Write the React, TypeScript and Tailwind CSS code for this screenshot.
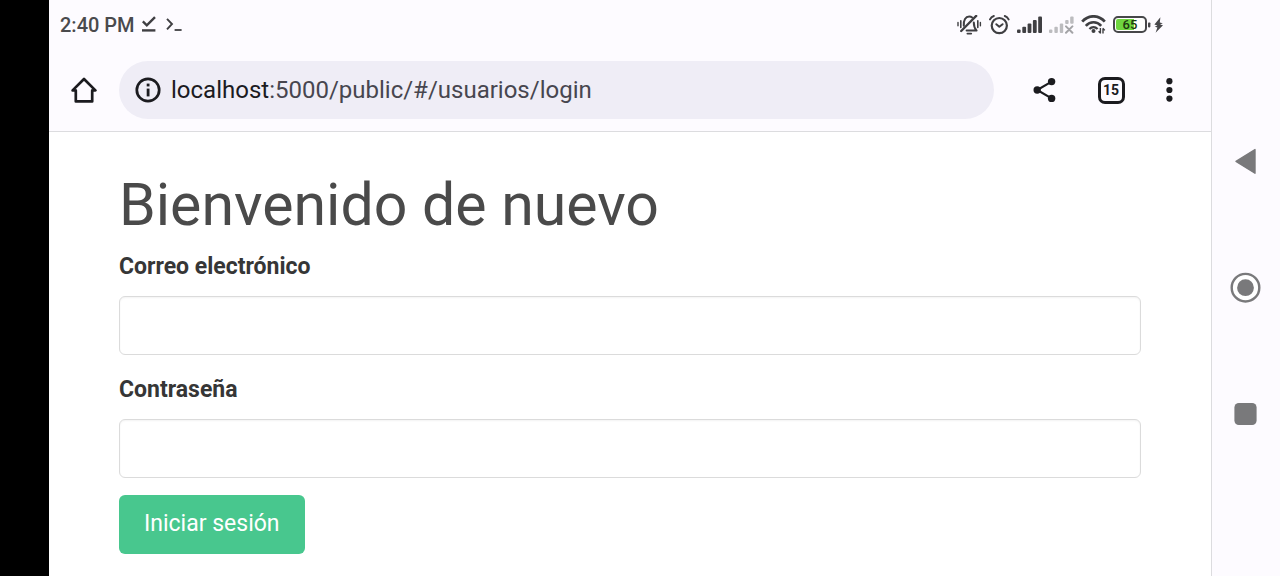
import type { ReactNode } from "react";

type FieldProps = {
  id: string;
  label: string;
  type: string;
};

function Field({ id, label, type }: FieldProps) {
  return (
    <div className="flex flex-col gap-[11px]">
      <label
        htmlFor={id}
        className="text-[23px] leading-9 font-bold text-[#363636]"
      >
        {label}
      </label>
      <input
        id={id}
        type={type}
        className="w-full h-[59px] px-4 text-[23px] text-[#363636] bg-white border border-[#dbdbdb] rounded-md shadow-[inset_0_1px_2px_rgba(10,10,10,0.05)] outline-none"
      />
    </div>
  );
}

type IconButtonProps = {
  label: string;
  narrow?: boolean;
  children: ReactNode;
};

function IconButton({ label, narrow, children }: IconButtonProps) {
  return (
    <button
      type="button"
      aria-label={label}
      className={`flex items-center justify-center h-8 shrink-0 ${narrow ? "w-4" : "w-8"}`}
    >
      {children}
    </button>
  );
}

function MutedBellIcon() {
  return (
    <svg width="25" height="20" viewBox="0 0 25 20" fill="none" stroke="#3f3f42">
      <path d="M1 7.4v3.4M23.4 7.4v3.4" strokeWidth="1.4" strokeLinecap="round" />
      <path d="M3.8 5.8v6.6M20.8 5.8v6.6" strokeWidth="1.6" strokeLinecap="round" />
      <path
        d="M6.8 10.8C6.4 4.8 8.6 1.6 12.2 1.6c1.2 0 2.2.3 3 .9M16.8 7.4c0 4 .8 6 2.8 8.2H9.6"
        strokeWidth="2"
        strokeLinecap="round"
        strokeLinejoin="round"
      />
      <path d="M19.2.9 4.2 16" strokeWidth="2.3" strokeLinecap="round" />
      <path d="M10.4 18.6h3.8" strokeWidth="1.8" strokeLinecap="round" />
    </svg>
  );
}

function AlarmIcon() {
  return (
    <svg
      width="21"
      height="20"
      viewBox="0 0 21 20"
      fill="none"
      stroke="#3f3f42"
      strokeLinecap="round"
      strokeLinejoin="round"
    >
      <circle cx="10.3" cy="10.6" r="7.6" strokeWidth="2.2" />
      <path d="M7.3 9.2l3 2.6 3.3-2.6" strokeWidth="2" />
      <path d="M1 4.4C1.8 2.8 3 1.6 4.8 1M19.6 4.4C18.8 2.8 17.6 1.6 15.8 1" strokeWidth="2" />
    </svg>
  );
}

function SignalIcon() {
  return (
    <svg width="25" height="18" viewBox="0 0 25 18" fill="#3f3f42">
      <rect x="0" y="13.4" width="3.6" height="3.6" rx="1" />
      <rect x="5.3" y="10.8" width="3.8" height="6.2" rx="1" />
      <rect x="10.6" y="7.6" width="3.8" height="9.4" rx="1" />
      <rect x="15.9" y="4" width="3.8" height="13" rx="1" />
      <rect x="21.2" y="0.4" width="3.8" height="16.6" rx="1" />
    </svg>
  );
}

function NoSignalIcon() {
  return (
    <svg width="25" height="18" viewBox="0 0 25 18" fill="#bcbcbf">
      <rect x="0" y="13.4" width="3.4" height="3.6" rx="1" />
      <rect x="5.4" y="10.8" width="3.4" height="6.2" rx="1" />
      <rect x="10.8" y="7.6" width="3.4" height="9.4" rx="1" />
      <rect x="16.2" y="4" width="3.4" height="4" rx="1" />
      <rect x="21.2" y="0.4" width="3.4" height="7.4" rx="1" />
      <path
        d="M17 10.4l6.4 6.4M23.4 10.4L17 16.8"
        stroke="#a4a4a7"
        strokeWidth="2"
        strokeLinecap="round"
      />
    </svg>
  );
}

function WifiIcon() {
  return (
    <svg width="25" height="19" viewBox="0 0 25 19" fill="none" stroke="#3f3f42">
      <path d="M1.2 6.6C7.6-.4 17.4-.4 23.8 6.6" strokeWidth="2.8" />
      <path d="M4.8 10.8c4.4-4.8 11-4.8 15.4 0" strokeWidth="2.6" />
      <path d="M8.4 14c2.4-2.5 5.8-2.5 8.2 0" strokeWidth="2.2" />
      <circle cx="12.5" cy="16" r="2" fill="#3f3f42" stroke="none" />
      <path d="M19.4 13v5.4M19.6 18.4l-2-2.2M22 18.6v-5.4M21.8 13.2l2 2.2" strokeWidth="1.4" />
    </svg>
  );
}

function Battery() {
  return (
    <div className="flex items-center">
      <div className="w-[34px] h-[17px] p-px border-2 border-[#47474a] rounded-[5px] bg-white">
        <div className="flex items-center justify-center h-full rounded-xs bg-linear-to-r from-[#6fd63f] from-65% to-white to-65% text-[13px] leading-3 font-medium text-[#1c3a10]">
          65
        </div>
      </div>
      <svg width="17" height="16" viewBox="0 0 17 16" fill="#47474a">
        <rect x="1" y="5.4" width="2.4" height="5" rx="0.8" />
        <path d="M13.4.2 7.4 7.4l3 1.2-2.6 1.2 2.6.6L8.6 15.8l7.4-7.6-3-.8 2.8-1.2-3-.8z" />
      </svg>
    </div>
  );
}

function StatusBar() {
  return (
    <div className="flex items-center justify-between h-[49px] pl-[11px] pr-[47px]">
      <div className="flex items-center gap-[7px] text-xl font-medium text-[#4a4a4d]">
        <span>2:40 PM</span>
        <svg width="14" height="18" viewBox="0 0 14 18" fill="none" stroke="#3f3f42">
          <path d="M.8 5.4l4 4L13 1.2" strokeWidth="2.4" />
          <path d="M0 14.4h13.4" strokeWidth="2.4" />
        </svg>
        <svg width="20" height="18" viewBox="0 0 20 18" fill="none" stroke="#3f3f42">
          <path d="M4 2.8l5 5.2-5 5.4" strokeWidth="1.9" />
          <path d="M11.6 14h7" strokeWidth="1.8" />
        </svg>
      </div>
      <div className="flex items-center gap-[7px]">
        <MutedBellIcon />
        <AlarmIcon />
        <SignalIcon />
        <NoSignalIcon />
        <WifiIcon />
        <Battery />
      </div>
    </div>
  );
}

function Toolbar() {
  return (
    <div className="flex items-center h-[83px] pl-[19px] pr-[34px] border-b border-[#dcdcdf]">
      <IconButton label="Inicio">
        <svg width="26" height="26" viewBox="0 0 26 26" fill="none">
          <path
            d="M4.8 13.4H1.6L13 2l11.4 11.4h-3.2v11H4.8z"
            stroke="#1b1b1f"
            strokeWidth="2.7"
            strokeLinejoin="round"
          />
        </svg>
      </IconButton>
      <div className="flex flex-1 items-center gap-2.5 h-[58px] ml-[19px] px-4 rounded-full bg-[#efedf6]">
        <svg width="26" height="26" viewBox="0 0 26 26" fill="#1b1b1f">
          <circle cx="13" cy="13" r="11.2" fill="none" stroke="#1b1b1f" strokeWidth="2.7" />
          <rect x="11.7" y="6.6" width="2.8" height="2.8" />
          <rect x="11.7" y="11.6" width="2.8" height="7.8" />
        </svg>
        <a href="#/usuarios/login" className="text-2xl text-[#47464f]">
          <span className="text-[#1b1b1f]">localhost</span>
          :5000/public/#/usuarios/login
        </a>
      </div>
      <div className="flex items-center gap-[34px] ml-[35px]">
        <IconButton label="Compartir">
          <svg width="24" height="26" viewBox="0 0 24 26" fill="#1b1b1f">
            <path d="M18.6 4.6 4.2 13l14.4 8.4" fill="none" stroke="#1b1b1f" strokeWidth="2.2" />
            <circle cx="18.6" cy="4.6" r="3.7" />
            <circle cx="4.2" cy="13" r="3.7" />
            <circle cx="18.6" cy="21.4" r="3.7" />
          </svg>
        </IconButton>
        <IconButton label="Pestañas">
          <span className="flex items-center justify-center size-[27px] border-3 border-[#1b1b1f] rounded-[7px] text-sm font-bold text-[#1b1b1f]">
            15
          </span>
        </IconButton>
        <IconButton label="Más opciones" narrow>
          <svg width="8" height="26" viewBox="0 0 8 26" fill="#1b1b1f">
            <circle cx="4.4" cy="4.2" r="3.1" />
            <circle cx="4.4" cy="13" r="3.1" />
            <circle cx="4.4" cy="21.6" r="3.1" />
          </svg>
        </IconButton>
      </div>
    </div>
  );
}

function NavigationBar() {
  return (
    <nav className="flex flex-col items-center justify-center gap-[94px] w-[69px] shrink-0 border-l border-[#dcdcdf] bg-[#fdfbff]">
      <IconButton label="Atrás">
        <svg width="32" height="32" viewBox="0 0 32 32" fill="#79797b">
          <path
            d="M6 15.4 25 3.6v23.6z"
            stroke="#79797b"
            strokeWidth="1.4"
            strokeLinejoin="round"
          />
        </svg>
      </IconButton>
      <IconButton label="Pantalla principal">
        <svg width="32" height="32" viewBox="0 0 32 32">
          <circle cx="15.5" cy="15.7" r="13.8" fill="#fff" stroke="#79797b" strokeWidth="2.4" />
          <circle cx="15.5" cy="15.7" r="8.4" fill="#79797b" />
        </svg>
      </IconButton>
      <IconButton label="Recientes">
        <svg width="32" height="32" viewBox="0 0 32 32" fill="#79797b">
          <rect x="4.4" y="5" width="22.2" height="22" rx="4.4" />
        </svg>
      </IconButton>
    </nav>
  );
}

export default function App() {
  return (
    <div className="flex min-h-screen bg-white font-[Roboto,sans-serif]">
      <div className="w-[49px] shrink-0 bg-black" />
      <div className="flex-1">
        <header className="bg-[#fdfbff]">
          <StatusBar />
          <Toolbar />
        </header>
        <main className="px-[70px] pt-[41px]">
          <h1 className="mb-3 text-[59px] leading-[64px] text-[#4a4a4a]">
            Bienvenido de nuevo
          </h1>
          <form className="flex flex-col items-stretch gap-[17px]">
            <Field id="correo" label="Correo electrónico" type="email" />
            <Field id="palabra-secreta" label="Contraseña" type="password" />
            <button
              type="button"
              className="self-start h-[59px] px-[25px] rounded-md bg-[#48c78e] text-[23px] text-white"
            >
              Iniciar sesión
            </button>
          </form>
        </main>
      </div>
      <NavigationBar />
    </div>
  );
}
